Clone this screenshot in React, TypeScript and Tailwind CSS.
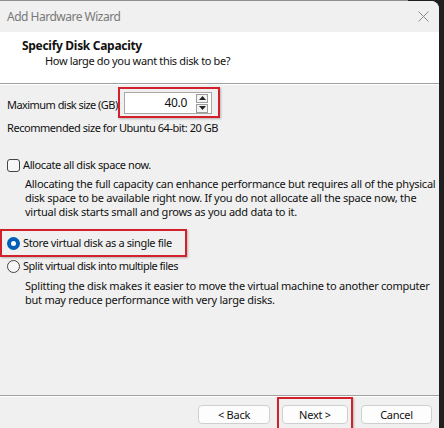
import React from "react";

function Spin() {
  return (
    <div className="flex flex-col gap-[1px] mr-[3px]">
      <div className="w-[12px] h-[9px] border border-[#9c9c9c] bg-[#f4f4f4] flex items-center justify-center">
        <svg width="7" height="4" viewBox="0 0 7 4"><path d="M0 4L3.5 0L7 4Z" fill="#222" /></svg>
      </div>
      <div className="w-[12px] h-[9px] border border-[#9c9c9c] bg-[#f4f4f4] flex items-center justify-center">
        <svg width="7" height="4" viewBox="0 0 7 4"><path d="M0 0L3.5 4L7 0Z" fill="#222" /></svg>
      </div>
    </div>
  );
}

export default function App() {
  return (
    <div className="w-[444px] h-[428px] bg-[#1f1f1f] overflow-hidden text-[11px] leading-[14px] tracking-[-0.25px] text-[#111] font-['Noto_Sans',sans-serif]">
      <div className="h-[1px] w-[408px] bg-[#8f8f8f]" />
      <div className="w-[439px] h-[427px] bg-[#f0f0f0] rounded-tr-[8px] flex flex-col overflow-hidden">
        {/* title bar */}
        <div className="h-[31px] shrink-0 flex items-center justify-between pl-[7px] pr-[10px] bg-[#f0f0f0]">
          <span className="text-[12px] tracking-[-0.5px] text-[#787878]">Add Hardware Wizard</span>
          <svg width="11" height="11" viewBox="0 0 11 11">
            <path d="M0.5 0.5L10.5 10.5M10.5 0.5L0.5 10.5" stroke="#8c8c8c" strokeWidth="1" />
          </svg>
        </div>
        {/* header */}
        <div className="h-[52px] shrink-0 bg-white border-b border-[#a0a0a0] pl-[22px] pt-[7px]">
          <div className="font-bold text-[12px] tracking-[-0.3px]">Specify Disk Capacity</div>
          <div className="pl-[23px] mt-[1px] tracking-[-0.35px]">How large do you want this disk to be?</div>
        </div>
        {/* body */}
        <div className="flex-1 flex flex-col border-t border-white">
          <div className="flex items-start mt-[2px] pl-[7px]">
            <span className="w-[114px] mt-[11px] whitespace-nowrap tracking-[-0.55px]">Maximum disk size (GB):</span>
            <div className="ml-[-3px] border-2 border-[#d3212b] pt-[3px] pb-[2px] pl-[4px] pr-[6px] flex shadow-[1px_1px_2px_rgba(0,0,0,0.25)]">
              <div className="w-[88px] h-[22px] bg-white border border-[#a8a8a8] flex items-center justify-end">
                <span className="mr-[9px] text-[12px] tracking-[-0.3px]">40.0</span>
                <Spin />
              </div>
            </div>
          </div>
          <div className="pl-[7px] mt-[3px] whitespace-nowrap tracking-[-0.45px]">Recommended size for Ubuntu 64-bit: 20 GB</div>

          <div className="flex items-center pl-[7px] mt-[23px]">
            <div className="w-[13px] h-[13px] rounded-[3px] border border-[#444] bg-[#f7f7f7]" />
            <span className="ml-[3px] tracking-[-0.4px]">Allocate all disk space now.</span>
          </div>
          <div className="pl-[25px] mt-[5px] whitespace-nowrap">
            Allocating the full capacity can enhance performance but requires all of the physical
            <br />
            disk space to be available right now. If you do not allocate all the space now, the
            <br />
            virtual disk starts small and grows as you add data to it.
          </div>

          <div className="mt-[10px] w-[187px] h-[28px] border-2 border-[#d3212b] flex items-center pl-[5px] shadow-[1px_1px_2px_rgba(0,0,0,0.25)]">
            <div className="w-[13px] h-[13px] rounded-full bg-[#005fb8] flex items-center justify-center">
              <div className="w-[5px] h-[5px] rounded-full bg-white" />
            </div>
            <span className="ml-[3px] whitespace-nowrap tracking-[-0.37px]">Store virtual disk as a single file</span>
          </div>
          <div className="flex items-center pl-[7px] mt-[2px]">
            <div className="w-[13px] h-[13px] rounded-full border border-[#444] bg-[#f7f7f7]" />
            <span className="ml-[3px] whitespace-nowrap tracking-[-0.5px]">Split virtual disk into multiple files</span>
          </div>
          <div className="pl-[25px] mt-[6px] whitespace-nowrap">
            Splitting the disk makes it easier to move the virtual machine to another computer
            <br />
            but may reduce performance with very large disks.
          </div>

          <div className="flex-1" />
          <div className="border-t border-[#a0a0a0] border-b border-b-white" />
          <div className="h-[31px] shrink-0 flex items-start justify-end pr-[7px]">
            <button className="mt-[8px] w-[72px] h-[19px] bg-[#fdfdfd] border border-[#cfcfcf] rounded-[4px] text-[11px] leading-[14px]">&lt; Back</button>
            <div className="ml-[7px] h-[34px] border-2 border-[#d3212b] pt-[6px] px-[3px] shadow-[1px_1px_2px_rgba(0,0,0,0.25)]">
              <button className="w-[66px] h-[19px] bg-[#fdfdfd] border border-[#cfcfcf] rounded-[4px] text-[11px] leading-[14px]">Next &gt;</button>
            </div>
            <button className="mt-[8px] ml-[8px] w-[71px] h-[19px] bg-[#fdfdfd] border border-[#cfcfcf] rounded-[4px] text-[11px] leading-[14px]">Cancel</button>
          </div>
        </div>
      </div>
    </div>
  );
}
